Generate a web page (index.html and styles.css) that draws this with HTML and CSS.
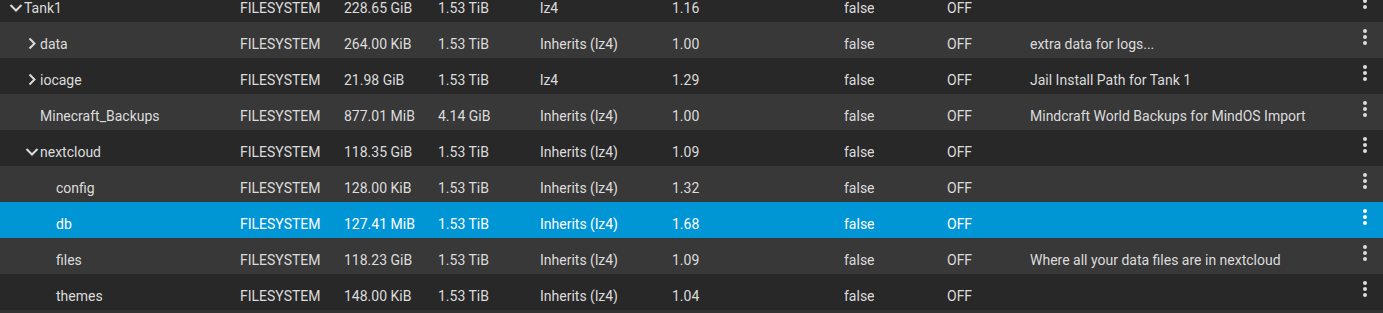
FILE: index.html
```html
<!DOCTYPE html>
<html>
<head>
<meta charset="utf-8">
<link rel="stylesheet" href="styles.css">
</head>
<body>
<div class="table">
  <div class="row dark">
    <div class="cell name lvl0"><span class="tog"><svg viewBox="0 0 16 16" width="16" height="16"><polyline points="2.5,5 8,10.5 13.5,5"/></svg></span><span>Tank1</span></div>
    <div class="cell">FILESYSTEM</div><div class="cell">228.65 GiB</div><div class="cell">1.53 TiB</div><div class="cell">lz4</div><div class="cell">1.16</div><div class="cell">false</div><div class="cell">OFF</div><div class="cell"></div>
    <div class="act"><svg viewBox="0 0 4 16" width="4" height="16"><circle cx="2" cy="2" r="2"/><circle cx="2" cy="8" r="2"/><circle cx="2" cy="14" r="2"/></svg></div>
  </div>
  <div class="row light">
    <div class="cell name lvl1"><span class="tog"><svg viewBox="0 0 16 16" width="16" height="16"><polyline points="5.5,2.5 10.5,7.5 5.5,12.5"/></svg></span><span>data</span></div>
    <div class="cell">FILESYSTEM</div><div class="cell">264.00 KiB</div><div class="cell">1.53 TiB</div><div class="cell">Inherits (lz4)</div><div class="cell">1.00</div><div class="cell">false</div><div class="cell">OFF</div><div class="cell">extra data for logs...</div>
    <div class="act"><svg viewBox="0 0 4 16" width="4" height="16"><circle cx="2" cy="2" r="2"/><circle cx="2" cy="8" r="2"/><circle cx="2" cy="14" r="2"/></svg></div>
  </div>
  <div class="row dark">
    <div class="cell name lvl1"><span class="tog"><svg viewBox="0 0 16 16" width="16" height="16"><polyline points="5.5,2.5 10.5,7.5 5.5,12.5"/></svg></span><span>iocage</span></div>
    <div class="cell">FILESYSTEM</div><div class="cell">21.98 GiB</div><div class="cell">1.53 TiB</div><div class="cell">lz4</div><div class="cell">1.29</div><div class="cell">false</div><div class="cell">OFF</div><div class="cell">Jail Install Path for Tank 1</div>
    <div class="act"><svg viewBox="0 0 4 16" width="4" height="16"><circle cx="2" cy="2" r="2"/><circle cx="2" cy="8" r="2"/><circle cx="2" cy="14" r="2"/></svg></div>
  </div>
  <div class="row light">
    <div class="cell name lvl1"><span class="tog"></span><span>Minecraft_Backups</span></div>
    <div class="cell">FILESYSTEM</div><div class="cell">877.01 MiB</div><div class="cell">4.14 GiB</div><div class="cell">Inherits (lz4)</div><div class="cell">1.00</div><div class="cell">false</div><div class="cell">OFF</div><div class="cell">Mindcraft World Backups for MindOS Import</div>
    <div class="act"><svg viewBox="0 0 4 16" width="4" height="16"><circle cx="2" cy="2" r="2"/><circle cx="2" cy="8" r="2"/><circle cx="2" cy="14" r="2"/></svg></div>
  </div>
  <div class="row dark">
    <div class="cell name lvl1"><span class="tog"><svg viewBox="0 0 16 16" width="16" height="16"><polyline points="2.5,5 8,10.5 13.5,5"/></svg></span><span>nextcloud</span></div>
    <div class="cell">FILESYSTEM</div><div class="cell">118.35 GiB</div><div class="cell">1.53 TiB</div><div class="cell">Inherits (lz4)</div><div class="cell">1.09</div><div class="cell">false</div><div class="cell">OFF</div><div class="cell"></div>
    <div class="act"><svg viewBox="0 0 4 16" width="4" height="16"><circle cx="2" cy="2" r="2"/><circle cx="2" cy="8" r="2"/><circle cx="2" cy="14" r="2"/></svg></div>
  </div>
  <div class="row light">
    <div class="cell name lvl2"><span class="tog"></span><span>config</span></div>
    <div class="cell">FILESYSTEM</div><div class="cell">128.00 KiB</div><div class="cell">1.53 TiB</div><div class="cell">Inherits (lz4)</div><div class="cell">1.32</div><div class="cell">false</div><div class="cell">OFF</div><div class="cell"></div>
    <div class="act"><svg viewBox="0 0 4 16" width="4" height="16"><circle cx="2" cy="2" r="2"/><circle cx="2" cy="8" r="2"/><circle cx="2" cy="14" r="2"/></svg></div>
  </div>
  <div class="row selected">
    <div class="cell name lvl2"><span class="tog"></span><span>db</span></div>
    <div class="cell">FILESYSTEM</div><div class="cell">127.41 MiB</div><div class="cell">1.53 TiB</div><div class="cell">Inherits (lz4)</div><div class="cell">1.68</div><div class="cell">false</div><div class="cell">OFF</div><div class="cell"></div>
    <div class="act"><svg viewBox="0 0 4 16" width="4" height="16"><circle cx="2" cy="2" r="2"/><circle cx="2" cy="8" r="2"/><circle cx="2" cy="14" r="2"/></svg></div>
  </div>
  <div class="row light">
    <div class="cell name lvl2"><span class="tog"></span><span>files</span></div>
    <div class="cell">FILESYSTEM</div><div class="cell">118.23 GiB</div><div class="cell">1.53 TiB</div><div class="cell">Inherits (lz4)</div><div class="cell">1.09</div><div class="cell">false</div><div class="cell">OFF</div><div class="cell">Where all your data files are in nextcloud</div>
    <div class="act"><svg viewBox="0 0 4 16" width="4" height="16"><circle cx="2" cy="2" r="2"/><circle cx="2" cy="8" r="2"/><circle cx="2" cy="14" r="2"/></svg></div>
  </div>
  <div class="row dark">
    <div class="cell name lvl2"><span class="tog"></span><span>themes</span></div>
    <div class="cell">FILESYSTEM</div><div class="cell">148.00 KiB</div><div class="cell">1.53 TiB</div><div class="cell">Inherits (lz4)</div><div class="cell">1.04</div><div class="cell">false</div><div class="cell">OFF</div><div class="cell"></div>
    <div class="act"><svg viewBox="0 0 4 16" width="4" height="16"><circle cx="2" cy="2" r="2"/><circle cx="2" cy="8" r="2"/><circle cx="2" cy="14" r="2"/></svg></div>
  </div>
  <div class="row tail"></div>
</div>
</body>
</html>
```

FILE: styles.css
```css
html, body {
  margin: 0;
  padding: 0;
  background: #282828;
  overflow: hidden;
}
body {
  font-family: Roboto, "Liberation Sans", sans-serif;
  font-size: 14px;
  color: #dcdcdc;
}
.table {
  margin-top: -14px;
}
.row {
  display: grid;
  grid-template-columns: 240px 104px 94px 102px 132px 172px 103px 83px 317px 1fr;
  height: 36px;
  align-items: center;
}
.row.dark { background: #282828; }
.row.light { background: #383838; }
.row.selected { background: #0095d5; color: #fff; }
.row.tail { background: #323232; }
.cell {
  padding-top: 7px;
  white-space: nowrap;
  overflow: hidden;
}
.name {
  display: flex;
  align-items: center;
}
.lvl0 { padding-left: 8px; }
.lvl1 { padding-left: 24px; }
.lvl2 { padding-left: 40px; }
.tog {
  width: 16px;
  height: 16px;
  flex: none;
  display: flex;
}
.tog svg polyline {
  fill: none;
  stroke: #dcdcdc;
  stroke-width: 2;
}
.act {
  display: flex;
  justify-content: center;
  padding-bottom: 6px;
}
.act svg circle { fill: #dcdcdc; }
.selected .act svg circle { fill: #fff; }
```
